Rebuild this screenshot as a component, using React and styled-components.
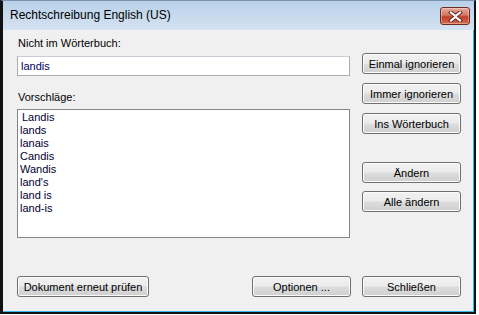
import React from "react";
import styled, { createGlobalStyle } from "styled-components";

const GlobalStyle = createGlobalStyle`
  *, *::before, *::after {
    box-sizing: border-box;
  }
  html, body {
    margin: 0;
    padding: 0;
    background: #ffffff;
  }
  body {
    font-family: "Liberation Sans", Arial, sans-serif;
    font-size: 11px;
    color: #000;
  }
`;

const suggestions = [
  "Landis",
  "lands",
  "lanais",
  "Candis",
  "Wandis",
  "land's",
  "land is",
  "land-is",
];

const App = () => {
  return (
    <>
      <GlobalStyle />
      <Window>
        <TitleBar>
          <Title>Rechtschreibung English (US)</Title>
          <CloseButton aria-label="Schließen">
            <svg width="15" height="11" viewBox="0 0 15 11">
              <path
                d="M3 1.5 L7.5 5 L12 1.5 M3 9.5 L7.5 6 L12 9.5"
                stroke="#5a2018"
                strokeWidth="4"
                fill="none"
                strokeLinecap="square"
              />
              <path
                d="M3 1.5 L7.5 5 L12 1.5 M3 9.5 L7.5 6 L12 9.5"
                stroke="#ffffff"
                strokeWidth="2.2"
                fill="none"
                strokeLinecap="square"
              />
            </svg>
          </CloseButton>
        </TitleBar>
        <Body>
          <Main>
            <LeftColumn>
              <Label>Nicht im Wörterbuch:</Label>
              <WordInput>landis</WordInput>
              <Label top={15}>Vorschläge:</Label>
              <ListBox>
                {suggestions.map((s) => (
                  <ListItem key={s}>{s}</ListItem>
                ))}
              </ListBox>
            </LeftColumn>
            <RightColumn>
              <Button top={0}>Einmal ignorieren</Button>
              <Button top={9}>Immer ignorieren</Button>
              <Button top={9}>Ins Wörterbuch</Button>
              <Button top={28}>Ändern</Button>
              <Button top={8}>Alle ändern</Button>
            </RightColumn>
          </Main>
          <Footer>
            <Button width={132}>Dokument erneut prüfen</Button>
            <FooterRight>
              <Button>Optionen ...</Button>
              <Button>Schließen</Button>
            </FooterRight>
          </Footer>
        </Body>
      </Window>
    </>
  );
};

const Window = styled.div`
  width: 476px;
  height: 314px;
  display: flex;
  flex-direction: column;
  border-top: 1px solid #7d93ad;
  border-left: 3px solid #111;
  border-right: 2px solid #111;
  border-bottom: 2px solid #111;
  background: linear-gradient(#b9d1ea, #d6e3f1 30px, #d6e3f1);
`;

const TitleBar = styled.div`
  height: 29px;
  flex: none;
  display: flex;
  align-items: center;
  justify-content: space-between;
  padding: 0 4px 2px 7px;
`;

const Title = styled.span`
  font-family: "Liberation Sans", Arial, sans-serif;
  font-size: 12px;
  color: #000;
`;

const CloseButton = styled.div`
  width: 30px;
  height: 18px;
  margin-top: 3px;
  border: 1px solid #6d2b22;
  border-radius: 3px;
  display: flex;
  align-items: center;
  justify-content: center;
  background: linear-gradient(#e9a99a, #d47864 45%, #c1402b 55%, #d46a4c);
  box-shadow: inset 0 0 0 1px rgba(255, 255, 255, 0.35);
`;

const Body = styled.div`
  flex: 1;
  display: flex;
  flex-direction: column;
  background: #f0f0f0;
  border-right: 1px solid #35b8ea;
  border-bottom: 1px solid #35b8ea;
  padding: 7px 12px 14px 14px;
`;

const Main = styled.div`
  flex: 1;
  display: flex;
  justify-content: space-between;
`;

const LeftColumn = styled.div`
  width: 333px;
  display: flex;
  flex-direction: column;
`;

const RightColumn = styled.div`
  width: 99px;
  display: flex;
  flex-direction: column;
  padding-top: 16px;
`;

const Label = styled.div`
  height: 13px;
  line-height: 13px;
  margin-top: ${({ top }) => top || 0}px;
  padding-left: 1px;
`;

const WordInput = styled.div`
  margin-top: 6px;
  height: 20px;
  border: 1px solid #abadb3;
  border-top-color: #c9ced6;
  background: #fff;
  padding: 0 3px;
  line-height: 18px;
  color: #000060;
`;

const ListBox = styled.div`
  margin-top: 5px;
  height: 129px;
  border: 1px solid #828790;
  background: #fff;
  padding: 1px 1px;
`;

const ListItem = styled.div`
  height: 13px;
  line-height: 13px;
  padding-left: 1px;
  color: #000030;
  &:first-child {
    padding-left: 3px;
  }
`;

const Button = styled.div`
  width: ${({ width }) => width || 99}px;
  height: 21px;
  margin-top: ${({ top }) => top || 0}px;
  border: 1px solid #707070;
  border-radius: 3px;
  display: flex;
  align-items: center;
  justify-content: center;
  background: linear-gradient(#f2f2f2, #ebebeb 48%, #dddddd 52%, #cfcfcf);
  box-shadow: inset 0 0 0 1px #fbfbfb;
  color: #000;
  white-space: nowrap;
`;

const Footer = styled.div`
  display: flex;
  justify-content: space-between;
  align-items: flex-end;
`;

const FooterRight = styled.div`
  display: flex;
  gap: 11px;
`;

export default App;
